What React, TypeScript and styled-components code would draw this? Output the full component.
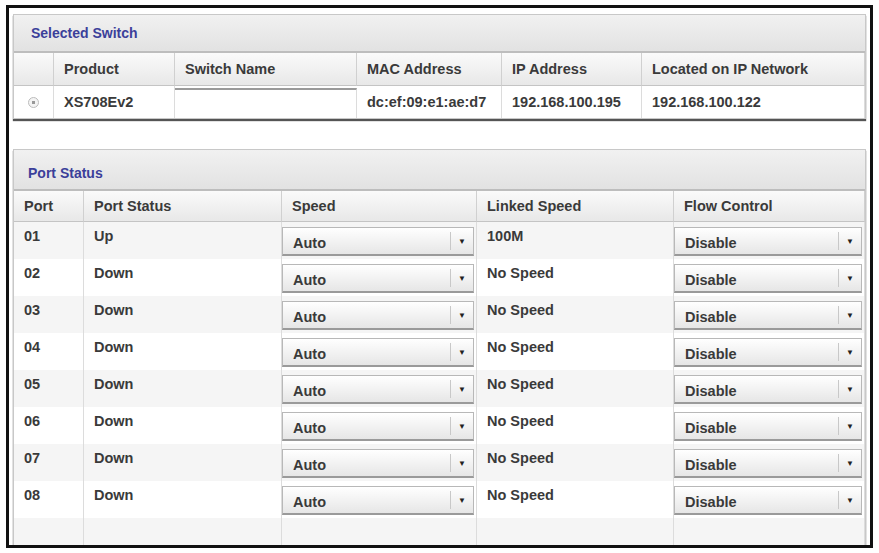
import React from 'react';
import styled, { createGlobalStyle } from 'styled-components';

const Global = createGlobalStyle`
    body { margin: 0; background: #fff; font-family: 'Liberation Sans', Arial, sans-serif; }
`;

const Frame = styled.div`
    margin: 5px 0 0 6px;
    width: 867px;
    height: 543px;
    box-sizing: border-box;
    border: 3px solid #111;
    padding: 6px 4px 0 4px;
    background: #fff;
    overflow: hidden;
`;

const Panel = styled.div<{ shadow?: boolean }>`
    border: 1px solid #c8c8c8;
    box-shadow: ${(p) => (p.shadow ? '0 2px 1px #555' : 'none')};
    background: #fff;
`;

const Title = styled.div<{ tall?: boolean }>`
    height: ${(p) => (p.tall ? '41px' : '38px')};
    display: flex;
    align-items: ${(p) => (p.tall ? 'flex-end' : 'center')};
    padding: ${(p) => (p.tall ? '0 0 8px 14px' : '0 0 0 17px')};
    box-sizing: border-box;
    background: linear-gradient(#f1f1f1, #e2e2e2);
    border-bottom: 2px solid #bdbdbd;
    color: #3b3f9a;
    font-weight: bold;
    font-size: 14px;
`;

const Row = styled.div<{ cols: string; h: number; bg?: string }>`
    display: grid;
    grid-template-columns: ${(p) => p.cols};
    height: ${(p) => p.h}px;
    background: ${(p) => p.bg || '#fff'};
`;

const Head = styled.div`
    display: flex;
    align-items: center;
    padding-left: 10px;
    font-weight: bold;
    font-size: 14.5px;
    color: #3a3a3a;
    background: linear-gradient(#fafafa, #e8e8e8);
    border-right: 1px solid #d0d0d0;
    border-bottom: 1px solid #c4c4c4;
`;

const Cell = styled.div<{ top?: boolean }>`
    display: flex;
    align-items: ${(p) => (p.top ? 'flex-start' : 'center')};
    padding: ${(p) => (p.top ? '6px 0 0 10px' : '0 0 0 10px')};
    font-weight: bold;
    font-size: 14.5px;
    color: #3a3a3a;
    border-right: 1px solid #dcdcdc;
    box-sizing: border-box;
`;

const SelCell = styled.div`
    border-right: 1px solid #dcdcdc;
    padding: 5px 2px 3px 0;
    box-sizing: border-box;
    display: flex;
    align-items: flex-end;
`;

const Select = styled.div`
    flex: 1;
    height: 29px;
    display: flex;
    align-items: center;
    border: 1px solid #b8b8b8;
    border-bottom: 2px solid #9a9a9a;
    background: linear-gradient(#ffffff, #e6e6e6);
    font-weight: bold;
    font-size: 14.5px;
    color: #3a3a3a;
    box-sizing: border-box;
`;

const SelText = styled.span`
    flex: 1;
    padding-left: 10px;
    padding-top: 3px;
`;

const Arrow = styled.span`
    width: 22px;
    height: 18px;
    border-left: 1px solid #c8c8c8;
    display: flex;
    align-items: center;
    justify-content: center;
    font-size: 8px;
    color: #222;
`;

const Input = styled.div`
    margin: 2px 0 0 0;
    border-top: 2px solid #9a9a9a;
    border-right: 1px solid #dcdcdc;
    background: #fff;
`;

const Radio = styled.div`
    display: flex;
    align-items: center;
    justify-content: center;
    border-right: 1px solid #dcdcdc;
    &::after {
        content: '';
        width: 9px;
        height: 9px;
        border-radius: 50%;
        border: 1px solid #bbb;
        background: radial-gradient(#999 0 1.5px, #f4f4f4 2px);
    }
`;

const Gap = styled.div`
    height: 30px;
`;

const topCols = '40px 121px 182px 145px 140px 1fr';
const portCols = '70px 198px 195px 197px 1fr';
const ports = ['01', '02', '03', '04', '05', '06', '07', '08'];

const Dropdown = ({ value }: { value: string }) => (
    <SelCell>
        <Select>
            <SelText>{value}</SelText>
            <Arrow>▼</Arrow>
        </Select>
    </SelCell>
);

export default function App() {
    return (
        <>
            <Global />
            <Frame>
                <Panel shadow>
                    <Title>Selected Switch</Title>
                    <Row cols={topCols} h={33}>
                        <Head />
                        <Head>Product</Head>
                        <Head>Switch Name</Head>
                        <Head>MAC Address</Head>
                        <Head>IP Address</Head>
                        <Head>Located on IP Network</Head>
                    </Row>
                    <Row cols={topCols} h={32}>
                        <Radio />
                        <Cell>XS708Ev2</Cell>
                        <Input />
                        <Cell>dc:ef:09:e1:ae:d7</Cell>
                        <Cell>192.168.100.195</Cell>
                        <Cell>192.168.100.122</Cell>
                    </Row>
                </Panel>
                <Gap />
                <Panel shadow>
                    <Title tall>Port Status</Title>
                    <Row cols={portCols} h={31}>
                        <Head>Port</Head>
                        <Head>Port Status</Head>
                        <Head>Speed</Head>
                        <Head>Linked Speed</Head>
                        <Head>Flow Control</Head>
                    </Row>
                    {ports.map((p, i) => (
                        <Row key={p} cols={portCols} h={37} bg={i % 2 === 0 ? '#f5f5f5' : '#fff'}>
                            <Cell top>{p}</Cell>
                            <Cell top>{i === 0 ? 'Up' : 'Down'}</Cell>
                            <Dropdown value="Auto" />
                            <Cell top>{i === 0 ? '100M' : 'No Speed'}</Cell>
                            <Dropdown value="Disable" />
                        </Row>
                    ))}
                    <Row cols={portCols} h={30} bg="#f5f5f5">
                        <Cell />
                        <Cell />
                        <Cell />
                        <Cell />
                        <Cell />
                    </Row>
                </Panel>
            </Frame>
        </>
    );
}
